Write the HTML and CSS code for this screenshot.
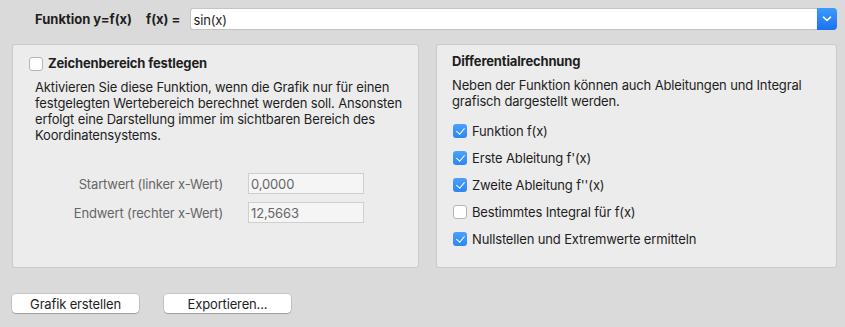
FILE: index.html
```html
<!DOCTYPE html>
<html lang="de">
<head>
<meta charset="utf-8">
<link rel="stylesheet" href="styles.css">
</head>
<body>
<div class="top">
  <span class="lbl-b">Funktion y=f(x)</span>
  <span class="lbl-b fx">f(x) =</span>
  <div class="combo">
    <span class="combo-text">sin(x)</span>
    <span class="combo-btn"><svg width="10" height="6" viewBox="0 0 10 6"><path d="M1.5 1.2 L5 4.5 L8.5 1.2" fill="none" stroke="#fff" stroke-width="1.6" stroke-linecap="round" stroke-linejoin="round"/></svg></span>
  </div>
</div>
<div class="panels">
  <section class="panel left">
    <div class="head"><span class="cb"></span><span class="title">Zeichenbereich festlegen</span></div>
    <p class="desc">Aktivieren Sie diese Funktion, wenn die Grafik nur für einen festgelegten Wertebereich berechnet werden soll. Ansonsten erfolgt eine Darstellung immer im sichtbaren Bereich des Koordinatensystems.</p>
    <div class="form">
      <div class="frow"><span class="flbl">Startwert (linker x-Wert)</span><span class="fin">0,0000</span></div>
      <div class="frow"><span class="flbl">Endwert (rechter x-Wert)</span><span class="fin">12,5663</span></div>
    </div>
  </section>
  <section class="panel right">
    <div class="title rtitle">Differentialrechnung</div>
    <p class="desc rdesc">Neben der Funktion können auch Ableitungen und Integral grafisch dargestellt werden.</p>
    <ul class="checks">
      <li><span class="cb on"></span>Funktion f(x)</li>
      <li><span class="cb on"></span>Erste Ableitung f'(x)</li>
      <li><span class="cb on"></span>Zweite Ableitung f''(x)</li>
      <li><span class="cb"></span>Bestimmtes Integral für f(x)</li>
      <li><span class="cb on"></span>Nullstellen und Extremwerte ermitteln</li>
    </ul>
  </section>
</div>
<div class="buttons">
  <button class="btn">Grafik erstellen</button>
  <button class="btn">Exportieren...</button>
</div>
</body>
</html>
```
FILE: styles.css
```css
* { box-sizing: border-box; }
body {
  margin: 0;
  width: 845px;
  height: 327px;
  background: #dadada;
  font-family: "Inter", "Liberation Sans", sans-serif;
  font-size: 13px;
  letter-spacing: -0.15px;
  color: #1e1e1e;
  overflow: hidden;
}
.top {
  display: flex;
  align-items: center;
  padding: 8px 8px 0 35px;
  height: 30px;
}
.lbl-b { font-weight: 700; letter-spacing: 0; }
.fx { margin-left: 14px; }
.combo {
  margin-left: 10px;
  flex: 1;
  height: 22px;
  display: flex;
  background: #fff;
  border: 1px solid #c4c4c4;
  border-right: none;
  border-radius: 3px;
}
.combo-text { flex: 1; padding: 2px 0 0 2px; line-height: 18px; }
.combo-btn {
  width: 20px;
  margin: -1px 0;
  border-radius: 0 4px 4px 0;
  background: linear-gradient(#3b9bfb, #1a72f2);
  display: flex;
  align-items: center;
  justify-content: center;
}
.panels {
  display: flex;
  gap: 17px;
  padding: 14px 8px 0 12px;
}
.panel {
  height: 224px;
  background: #ececec;
  border: 1px solid #cacaca;
  border-radius: 3px;
}
.left { width: 407px; padding: 12px 4px 0 16px; }
.right { width: 401px; padding: 9px 16px 0 15px; }
.head { display: flex; align-items: center; height: 14px; }
.title { font-weight: 700; line-height: 14px; }
.head .title { margin-left: 5px; margin-top: -2px; }
.cb {
  width: 14px;
  height: 14px;
  flex: none;
  border: 1px solid #b5b5b5;
  border-radius: 3px;
  background: #fff;
  position: relative;
}
.cb.on {
  border: none;
  background: linear-gradient(#4aa1fb, #2c85f4);
}
.cb.on::after {
  content: "";
  position: absolute;
  left: 4.5px;
  top: 2px;
  width: 3.5px;
  height: 7px;
  border: solid #fff;
  border-width: 0 1.4px 1.4px 0;
  transform: rotate(40deg);
}
.desc {
  margin: 8px 0 0 6px;
  line-height: 16px;
}
.left .desc { width: 376px; }
.form {
  margin-top: 30px;
  display: flex;
  flex-direction: column;
  gap: 8px;
}
.frow { display: flex; align-items: center; }
.flbl {
  width: 194px;
  text-align: right;
  color: #666;
}
.fin {
  margin-left: 25px;
  width: 116px;
  height: 21px;
  border: 1px solid #cfcfcf;
  background: #f5f5f5;
  color: #666;
  padding: 1px 0 0 2px;
  line-height: 18px;
}
.rdesc { margin: 9px 0 0 0; }
.checks {
  list-style: none;
  margin: 15px 0 0 1px;
  padding: 0;
  display: flex;
  flex-direction: column;
  gap: 13px;
}
.checks li { display: flex; align-items: center; height: 14px; }
.checks .cb { margin-right: 5px; }
.buttons {
  display: flex;
  gap: 25px;
  padding: 26px 0 0 12px;
}
.btn {
  width: 127px;
  height: 19px;
  padding: 0;
  font: inherit;
  letter-spacing: inherit;
  color: #1e1e1e;
  background: #fff;
  border: none;
  border-radius: 4px;
  box-shadow: 0 0 0 0.5px rgba(0,0,0,0.18), 0 1px 1px rgba(0,0,0,0.2);
}
```
